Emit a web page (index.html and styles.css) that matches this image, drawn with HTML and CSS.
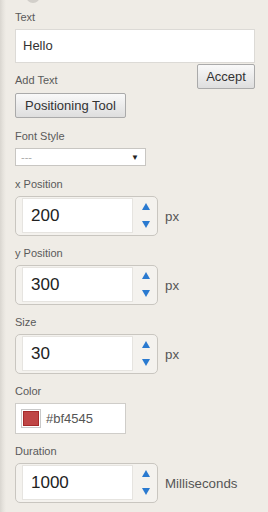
FILE: index.html
```html
<!DOCTYPE html>
<html lang="en">
<head>
    <meta charset="UTF-8">
    <meta name="viewport" content="width=device-width, initial-scale=1.0">
    <title>Text Tool</title>
    <link rel="stylesheet" href="styles.css">
</head>
<body>
    <div class="panel">
        <div class="knob"></div>

        <div class="label first">Text</div>
        <div class="text-input">Hello</div>

        <div class="add-row">
            <div class="label add-label">Add Text</div>
            <button class="btn accept">Accept</button>
        </div>
        <button class="btn pos-tool">Positioning Tool</button>

        <div class="group wide">
            <div class="label">Font Style</div>
            <div class="select">
                <span class="placeholder">---</span>
                <span class="caret">&#9660;</span>
            </div>
        </div>

        <div class="group wide">
            <div class="label">x Position</div>
            <div class="spin-row">
                <div class="spinner">
                    <div class="spin-value">200</div>
                    <div class="spin-arrows"><span class="up"></span><span class="down"></span></div>
                </div>
                <span class="unit">px</span>
            </div>
        </div>

        <div class="group">
            <div class="label">y Position</div>
            <div class="spin-row">
                <div class="spinner">
                    <div class="spin-value">300</div>
                    <div class="spin-arrows"><span class="up"></span><span class="down"></span></div>
                </div>
                <span class="unit">px</span>
            </div>
        </div>

        <div class="group">
            <div class="label">Size</div>
            <div class="spin-row">
                <div class="spinner">
                    <div class="spin-value">30</div>
                    <div class="spin-arrows"><span class="up"></span><span class="down"></span></div>
                </div>
                <span class="unit">px</span>
            </div>
        </div>

        <div class="group">
            <div class="label">Color</div>
            <div class="color-box">
                <span class="swatch"><span class="swatch-fill"></span></span>
                <span class="color-text">#bf4545</span>
            </div>
        </div>

        <div class="group">
            <div class="label">Duration</div>
            <div class="spin-row">
                <div class="spinner">
                    <div class="spin-value">1000</div>
                    <div class="spin-arrows"><span class="up"></span><span class="down"></span></div>
                </div>
                <span class="unit">Milliseconds</span>
            </div>
        </div>
    </div>
</body>
</html>
```

FILE: styles.css
```css
body {
    margin: 0;
    font-family: "Liberation Sans", Arial, sans-serif;
    background: linear-gradient(to right, #d9d6d0 0, #e6e3dd 3px, #efece6 6px);
    color: #555;
}

.panel {
    padding: 0 13px 0 15px;
    height: 512px;
    overflow: hidden;
}

.knob {
    width: 14px;
    height: 14px;
    margin: -11px 0 0 11px;
    border-radius: 50%;
    background: #d2cfca;
}

.label {
    font-size: 11px;
    line-height: 14px;
    color: #5a5a5a;
    margin-bottom: 5px;
}

.label.first {
    margin-top: 7px;
}

.text-input {
    height: 32px;
    border: 1px solid #dcdad6;
    background: #fff;
    box-sizing: content-box;
    padding-left: 7px;
    font-size: 13px;
    line-height: 32px;
    color: #333;
}

.add-row {
    display: flex;
    justify-content: space-between;
    align-items: flex-start;
    margin-top: 1px;
}

.add-label {
    margin: 9px 0 0;
}

.btn {
    font-family: "Liberation Sans", Arial, sans-serif;
    font-size: 13px;
    color: #333;
    height: 25px;
    padding: 0 8px;
    border: 1px solid #aaa;
    border-radius: 2px;
    background: linear-gradient(to bottom, #f9f9f9, #dedede);
    box-sizing: border-box;
}

.accept {
    width: 58px;
    margin-right: 0;
}

.pos-tool {
    display: block;
    width: 111px;
    margin-top: 4px;
    padding: 0;
}

.group {
    margin-top: 10px;
}

.group.wide {
    margin-top: 11px;
}

.select {
    width: 131px;
    height: 18px;
    box-sizing: border-box;
    border: 1px solid #c8c6c2;
    background: #fff;
    display: flex;
    align-items: center;
    justify-content: space-between;
    padding: 0 6px 0 5px;
}

.placeholder {
    font-size: 11px;
    color: #aaa;
}

.caret {
    font-size: 8px;
    color: #222;
}

.spin-row {
    display: flex;
    align-items: center;
}

.spinner {
    width: 143px;
    height: 40px;
    box-sizing: border-box;
    border: 1px solid #c9c6c0;
    border-radius: 5px;
    background: #f4f2ee;
    display: flex;
    padding: 1px 0 2px 6px;
}

.spin-value {
    width: 111px;
    box-sizing: border-box;
    background: #fff;
    border: 1px solid #e6e4e0;
    padding-left: 8px;
    font-size: 17px;
    line-height: 33px;
    color: #222;
}

.spin-arrows {
    flex: 1;
    display: flex;
    flex-direction: column;
    align-items: center;
    justify-content: center;
    gap: 11px;
    padding-left: 1px;
}

.up {
    width: 0;
    height: 0;
    border-left: 4px solid transparent;
    border-right: 4px solid transparent;
    border-bottom: 7px solid #2a7ad0;
}

.down {
    width: 0;
    height: 0;
    border-left: 4px solid transparent;
    border-right: 4px solid transparent;
    border-top: 7px solid #2a7ad0;
}

.unit {
    margin-left: 7px;
    font-size: 13.3px;
    color: #555;
}

.color-box {
    width: 111px;
    height: 31px;
    box-sizing: border-box;
    border: 1px solid #cfcdc9;
    background: #fff;
    display: flex;
    align-items: center;
    padding-left: 5px;
}

.swatch {
    width: 20px;
    height: 19px;
    box-sizing: border-box;
    border: 1px solid #c9c9c9;
    padding: 1px;
    display: flex;
}

.swatch-fill {
    flex: 1;
    background: #bf4545;
    border: 1px solid #a52a2a;
}

.color-text {
    margin-left: 5px;
    font-size: 13px;
    color: #555;
}
```
